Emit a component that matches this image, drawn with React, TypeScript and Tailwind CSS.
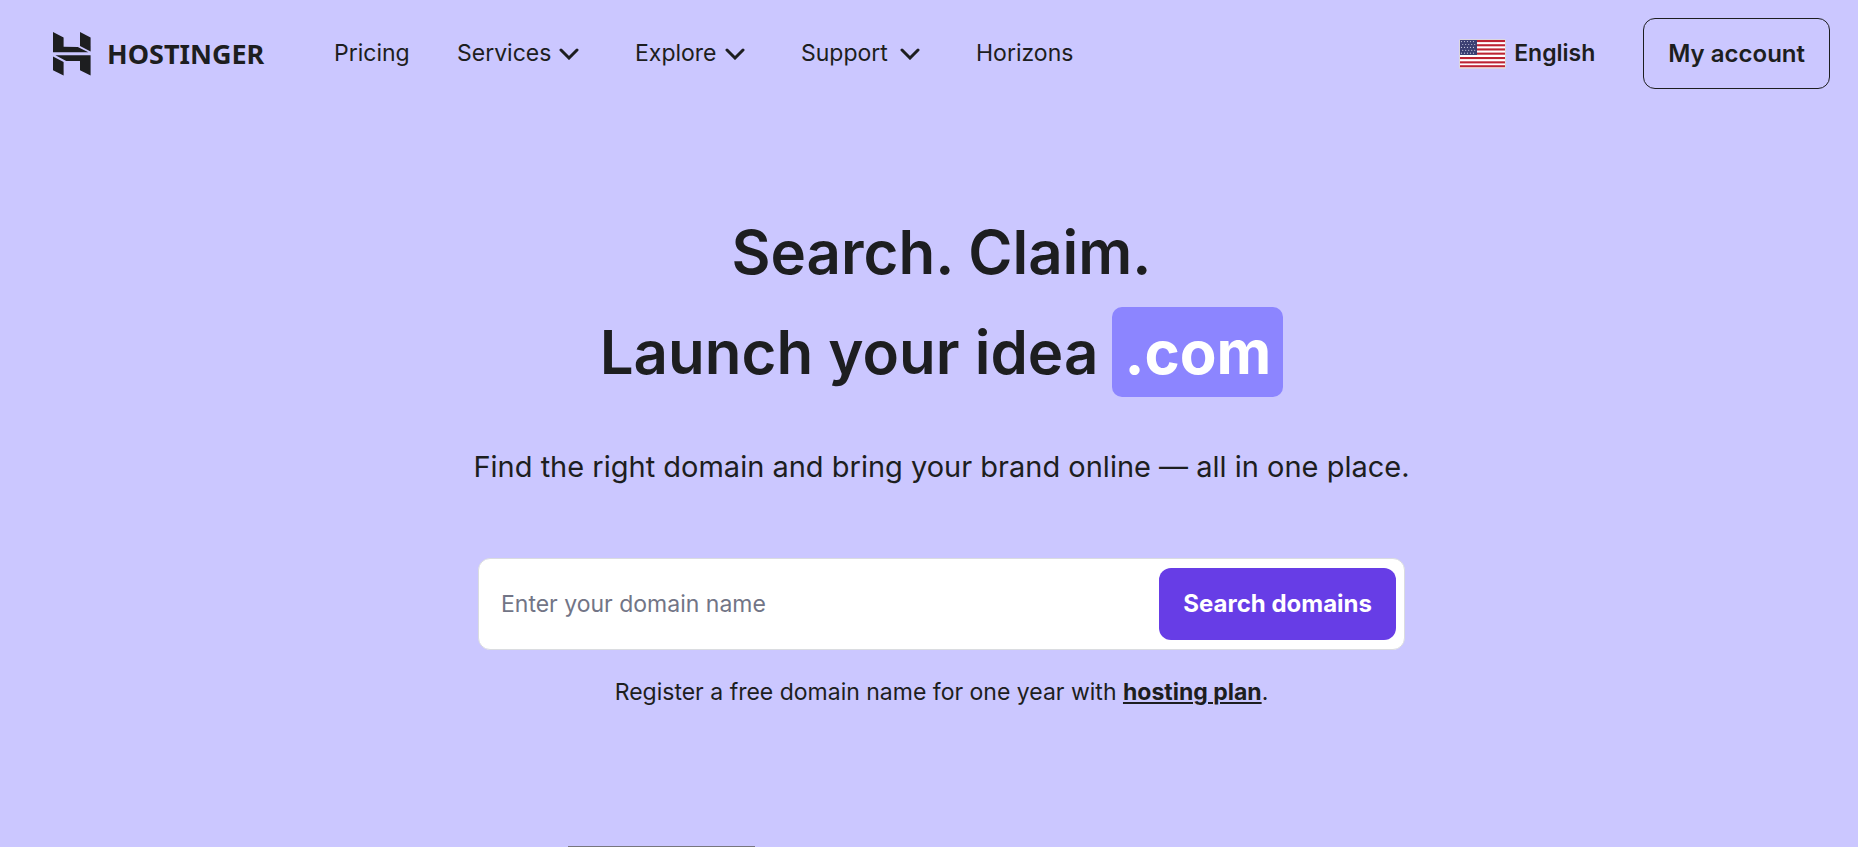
import React from 'react';

const navItems = [
  { label: 'Pricing', menu: false, width: 'w-[75px]' },
  { label: 'Services', menu: true, width: 'w-[94px]' },
  { label: 'Explore', menu: true, width: 'w-[82px]' },
  { label: 'Support', menu: true, width: 'w-[91px]' },
  { label: 'Horizons', menu: false, width: 'w-[96px]' },
];

const stars = [0, 1, 2, 3, 4].flatMap((row) =>
  [0, 1, 2, 3, 4].map((col) => ({ x: 2.5 + col * 3 + (row % 2) * 1.2, y: 2.6 + row * 2.9 }))
);

function Logo() {
  return (
    <a href="#" className="flex w-[219px] shrink-0 items-center gap-4">
      <svg width="38" height="44" viewBox="0 0 38 44" fill="#1d1e20" aria-hidden="true">
        <path d="M0 0 L10.6 5.6 V14.7 L24.8 15 L35.4 20.3 H0 Z" />
        <path d="M27 0 L37.6 5.6 V19.4 L27 14 Z" />
        <path d="M2.4 23.3 H37.6 V43.6 L27 38.2 V29 H13.2 Z" />
        <path d="M0 24.6 L10.6 30 V43.6 L0 38.2 Z" />
      </svg>
      <span className="font-['Noto_Sans',sans-serif] text-[27px] leading-8 font-bold">HOSTINGER</span>
    </a>
  );
}

function Chevron() {
  return (
    <svg width="20" height="12" viewBox="0 0 20 12" fill="none" aria-hidden="true">
      <path d="M2 2 L10 10 L18 2" stroke="#1d1e20" strokeWidth="3" strokeLinecap="round" />
    </svg>
  );
}

function Flag() {
  return (
    <svg width="47" height="30" viewBox="0 0 47 30" aria-hidden="true">
      <rect width="47" height="30" rx="1.5" fill="#dcd7df" />
      <rect x="1" y="1" width="45" height="28" fill="#fff" />
      {[1, 5.2, 9.4, 13.6, 18, 22.3, 26.2].map((y) => (
        <rect key={y} x="1" y={y} width="45" height="2.1" fill="#bd2433" />
      ))}
      <rect x="1" y="1" width="17" height="15" fill="#3b3f72" />
      {stars.map((s, i) => (
        <circle key={i} cx={s.x} cy={s.y} r="0.6" fill="#c5c6dc" />
      ))}
    </svg>
  );
}

export default function App() {
  return (
    <div className="min-h-screen bg-[#cbc7ff] font-['Inter',sans-serif] text-[#1d1e20]">
      {/* Header */}
      <header className="flex items-center justify-between py-[18px] pr-7 pl-[53px]">
        <div className="flex items-center gap-[62px]">
          <Logo />
          <nav className="flex items-center gap-12 text-[23px] leading-8">
            {navItems.map((item) =>
              item.menu ? (
                <button key={item.label} className="flex items-center gap-2 pr-2 whitespace-nowrap">
                  <span className={`${item.width} pb-0.5 text-left`}>{item.label}</span>
                  <Chevron />
                </button>
              ) : (
                <a key={item.label} href="#" className={`${item.width} pb-0.5`}>{item.label}</a>
              )
            )}
          </nav>
        </div>
        <div className="flex items-center gap-12">
          <button className="flex items-center gap-2 text-[23px] leading-8 font-semibold">
            <Flag />
            <span className="pb-0.5">English</span>
          </button>
          <button className="h-[71px] rounded-xl border border-[#1d1e20] px-6 text-[24px] font-semibold">
            My account
          </button>
        </div>
      </header>

      {/* Hero */}
      <main className="flex flex-col items-center pt-[100px] pl-[25px]">
        <h1 className="flex flex-col items-center gap-[10px] text-[60px] leading-[90px] font-semibold">
          <span>Search. Claim.</span>
          <span className="flex items-center gap-[14px]">
            Launch your idea
            <span className="rounded-[10px] bg-[#8c85ff] px-3 font-bold text-white">.com</span>
          </span>
        </h1>
        <p className="mt-[50px] text-[29px] leading-10">
          Find the right domain and bring your brand online — all in one place.
        </p>
        <form
          className="mt-[71px] flex h-[92px] w-full max-w-[927px] items-center rounded-xl border border-[#dadce0] bg-white p-2"
          onSubmit={(e) => e.preventDefault()}
        >
          <input
            type="text"
            aria-label="Domain name"
            placeholder="Enter your domain name"
            className="h-full min-w-0 flex-1 px-[14px] text-[23px] outline-none placeholder:text-[#727586]"
          />
          <button className="h-[72px] rounded-xl bg-[#673de6] px-6 text-[24px] font-bold text-white">
            Search domains
          </button>
        </form>
        <p className="mt-[26px] text-[23px] leading-8">
          Register a free domain name for one year with{' '}
          <a href="#" className="font-bold underline decoration-2 underline-offset-2">hosting plan</a>.
        </p>
      </main>

      {/* Top edge of the next block */}
      <div className="mt-[138px] ml-[568px] h-px w-[187px] bg-[#77757f]" />
    </div>
  );
}
